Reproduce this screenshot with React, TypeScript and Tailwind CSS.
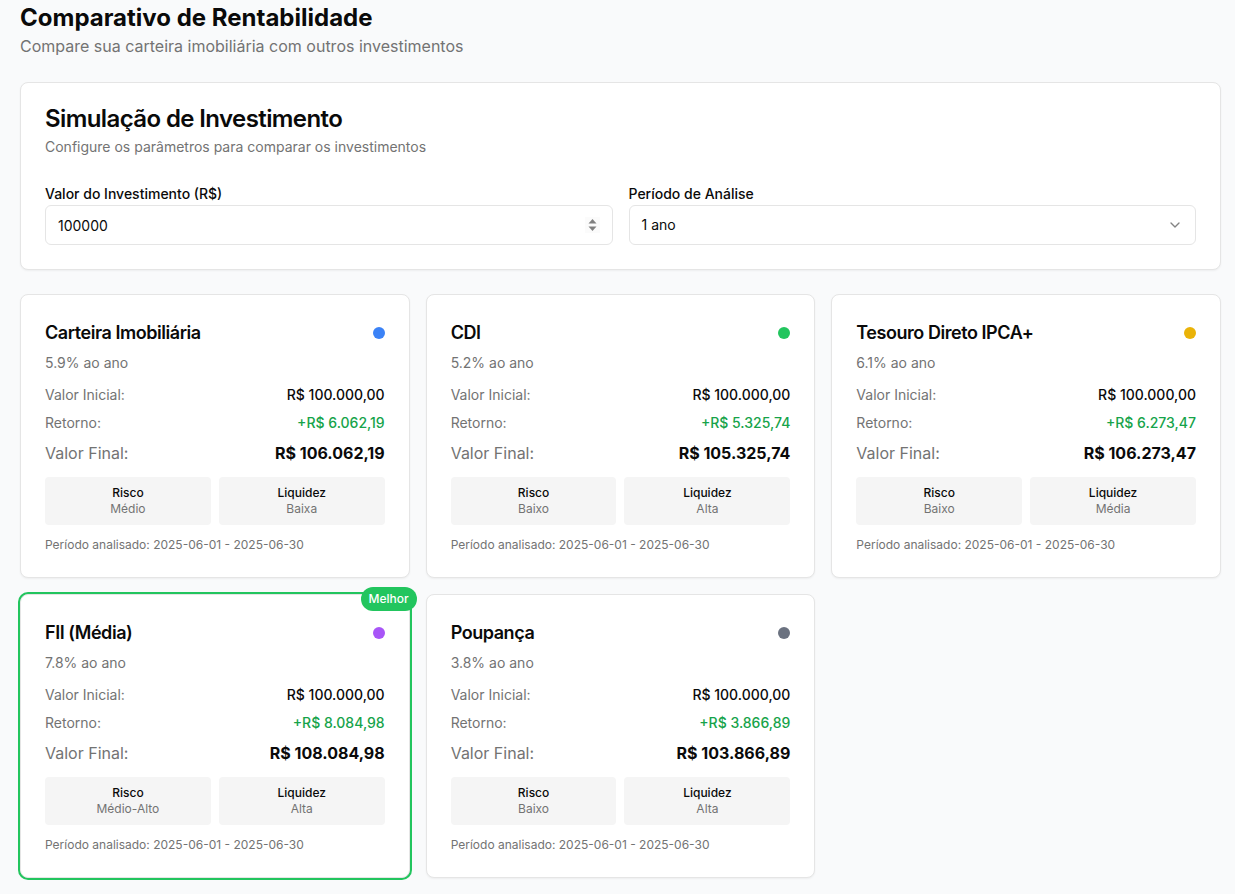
import React from 'react';
import { ChevronDown } from 'lucide-react';

type Investment = {
  name: string;
  rate: string;
  dot: string;
  ret: string;
  final: string;
  risk: string;
  liquidity: string;
  best?: boolean;
};

const investments: Investment[] = [
  { name: 'Carteira Imobiliária', rate: '5.9% ao ano', dot: 'bg-[#3b82f6]', ret: '+R$ 6.062,19', final: 'R$ 106.062,19', risk: 'Médio', liquidity: 'Baixa' },
  { name: 'CDI', rate: '5.2% ao ano', dot: 'bg-[#22c55e]', ret: '+R$ 5.325,74', final: 'R$ 105.325,74', risk: 'Baixo', liquidity: 'Alta' },
  { name: 'Tesouro Direto IPCA+', rate: '6.1% ao ano', dot: 'bg-[#eab308]', ret: '+R$ 6.273,47', final: 'R$ 106.273,47', risk: 'Baixo', liquidity: 'Média' },
  { name: 'FII (Média)', rate: '7.8% ao ano', dot: 'bg-[#a855f7]', ret: '+R$ 8.084,98', final: 'R$ 108.084,98', risk: 'Médio-Alto', liquidity: 'Alta', best: true },
  { name: 'Poupança', rate: '3.8% ao ano', dot: 'bg-[#6b7280]', ret: '+R$ 3.866,89', final: 'R$ 103.866,89', risk: 'Baixo', liquidity: 'Alta' },
];

const InfoBox: React.FC<{ title: string; value: string }> = ({ title, value }) => (
  <div className="rounded bg-[#f5f5f5] p-2 text-center text-xs">
    <div className="font-medium">{title}</div>
    <div className="text-[#737373]">{value}</div>
  </div>
);

const InvestmentCard: React.FC<{ item: Investment }> = ({ item }) => (
  <div className={`relative rounded-lg border border-[#e5e5e5] bg-white p-6 ${item.best ? 'shadow-[0_0_0_2px_#22c55e]' : 'shadow-[0_1px_2px_0_rgba(0,0,0,0.05)]'}`}>
    {item.best && (
      <div className="absolute -right-2 -top-2 rounded-full bg-[#22c55e] px-2 py-1 text-xs font-medium text-white">Melhor</div>
    )}
    <div className="flex items-center justify-between">
      <h3 className="text-lg font-semibold tracking-tight">{item.name}</h3>
      <div className={`h-3 w-3 rounded-full ${item.dot}`}></div>
    </div>
    <p className="mt-1.5 text-sm text-[#737373]">{item.rate}</p>
    <div className="mt-3 space-y-2">
      <div className="flex justify-between text-sm">
        <span className="text-[#737373]">Valor Inicial:</span>
        <span className="font-medium">R$ 100.000,00</span>
      </div>
      <div className="flex justify-between text-sm">
        <span className="text-[#737373]">Retorno:</span>
        <span className="font-medium text-[#16a34a]">{item.ret}</span>
      </div>
      <div className="flex justify-between text-base">
        <span className="text-[#737373]">Valor Final:</span>
        <span className="font-bold">{item.final}</span>
      </div>
    </div>
    <div className="mt-3 grid grid-cols-2 gap-2">
      <InfoBox title="Risco" value={item.risk} />
      <InfoBox title="Liquidez" value={item.liquidity} />
    </div>
    <p className="mt-3 text-xs text-[#737373]">Período analisado: 2025-06-01 - 2025-06-30</p>
  </div>
);

const App: React.FC = () => {
  return (
    <div className="min-h-screen bg-[#f9fafb] pb-4 pl-5 pr-[14px] pt-[2px] font-['Inter',sans-serif] text-[#0a0a0a]">
      <h1 className="text-2xl font-bold">Comparativo de Rentabilidade</h1>
      <p className="mt-0 text-[#737373]">Compare sua carteira imobiliária com outros investimentos</p>

      <div className="mt-6 rounded-lg border border-[#e5e5e5] bg-white p-6 shadow-[0_1px_2px_0_rgba(0,0,0,0.05)]">
        <h2 className="text-2xl font-semibold leading-none tracking-tight">Simulação de Investimento</h2>
        <p className="mt-1.5 text-sm text-[#737373]">Configure os parâmetros para comparar os investimentos</p>
        <div className="mt-[27px] grid grid-cols-2 gap-4">
          <div>
            <label className="mb-px block text-sm font-medium">Valor do Investimento (R$)</label>
            <div className="relative">
              <input
                type="number"
                defaultValue={100000}
                className="h-10 w-full rounded-md border border-[#e5e5e5] bg-white px-3 py-2 text-sm outline-none [appearance:textfield] [&::-webkit-inner-spin-button]:appearance-none"
              />
              {/* spinner arrows, the native ones render thinner here */}
              <svg className="absolute right-[13px] top-3 h-4 w-[15px] bg-[#fbfbfb]" viewBox="0 0 15 16" fill="#808080">
                <path d="M7.5 2 L11.5 6.5 L3.5 6.5 Z" />
                <path d="M3.5 9.5 L11.5 9.5 L7.5 14 Z" />
              </svg>
            </div>
          </div>
          <div>
            <label className="mb-px block text-sm font-medium">Período de Análise</label>
            <button className="flex h-10 w-full items-center justify-between rounded-md border border-[#e5e5e5] bg-white px-3 py-2 text-sm">
              <span>1 ano</span>
              <ChevronDown className="h-4 w-4 opacity-50" />
            </button>
          </div>
        </div>
      </div>

      <div className="mt-6 grid grid-cols-3 gap-4">
        {investments.map(item => (
          <InvestmentCard key={item.name} item={item} />
        ))}
      </div>
    </div>
  );
};

export default App;
